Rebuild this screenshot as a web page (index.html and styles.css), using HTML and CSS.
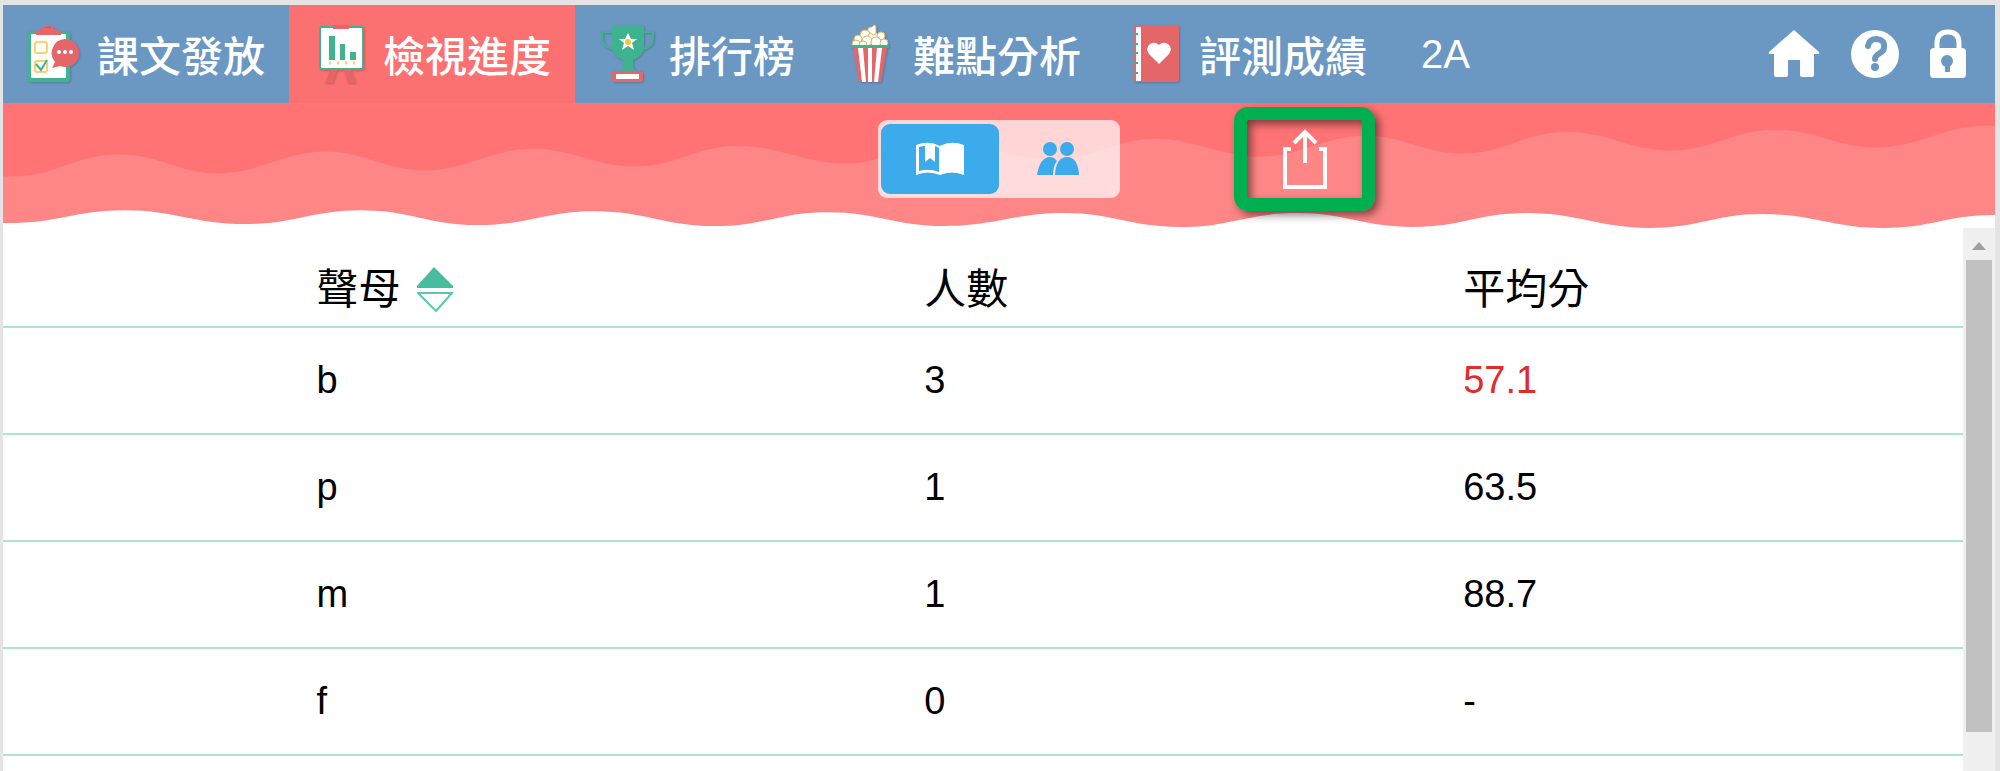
FILE: index.html
```html
<!DOCTYPE html>
<html lang="zh-Hant">
<head>
<meta charset="UTF-8" />
<title>檢視進度</title>
<link rel="stylesheet" href="styles.css">
</head>
<body>

<nav class="navbar">
  <a class="tab" href="#release">
    <svg class="tab-icon" viewBox="0 0 54 58">
      <rect x="0" y="6" width="43" height="51" rx="3" fill="#3fb28f"/>
      <rect x="4" y="9" width="35" height="44" rx="1" fill="#fff"/>
      <path d="M9 10V8q0-3 4-4h2q1-4 6-4t6 4h2q5 1 5 4v2z" fill="#e56668"/>
      <path d="M18 3q3-2 6 0" fill="none" stroke="#c9525a" stroke-width="1"/>
      <rect x="8" y="17" width="12" height="11" rx="2" fill="none" stroke="#ffd166" stroke-width="2"/>
      <rect x="8" y="36" width="12" height="11" rx="2" fill="none" stroke="#ffd166" stroke-width="2"/>
      <path d="M9 39l5 6 6-10" fill="none" stroke="#3fb28f" stroke-width="2"/>
      <path d="M38 14a14 14 0 1 1-5 27l-8 2 3-6A14 14 0 0 1 38 14z" fill="#e56668"/>
      <g fill="#fff"><circle cx="32" cy="27" r="2"/><circle cx="38" cy="27" r="2"/><circle cx="44" cy="27" r="2"/></g>
    </svg>
    <span>課文發放</span>
  </a>
  <a class="tab active" href="#progress" aria-current="page">
    <svg class="tab-icon" viewBox="-1 0 54 58">
      <path d="M16 45h7l-4 13h-8zM30 45h7l5 13h-8z" fill="#e56668"/>
      <rect x="6" y="2" width="43" height="42" rx="2" fill="#fff" stroke="#3fb28f" stroke-width="2"/>
      <rect x="19" y="0" width="16" height="4" fill="#e56668"/>
      <path d="M15 11h6v24h-6zM26 19h5v16h-5zM36 27h6v8h-6z" fill="#3fb28f"/>
      <path d="M15 38h28" stroke="#ffd166" stroke-width="3" stroke-dasharray="2 6"/>
    </svg>
    <span>檢視進度</span>
  </a>
  <a class="tab" href="#ranking">
    <svg class="tab-icon" viewBox="-2 0 54 58">
      <path d="M12 7H1v6q0 10 13 11M42 7h10v6q0 10-12 11" fill="none" stroke="#3fb28f" stroke-width="2"/>
      <path d="M11 2q0-2 2-2h28q2 0 2 2v19q0 10-11 14v6q1 4 4 6H18q3-2 4-6v-6Q11 31 11 21z" fill="#3fb28f"/>
      <path d="M27 8l3 6h6l-5 4 2 7-6-4-6 4 2-7-5-4h6z" fill="#fff"/>
      <circle cx="27" cy="17" r="3" fill="#ffc233"/>
      <rect x="11" y="46" width="31" height="11" rx="2" fill="#e56668"/>
      <rect x="15" y="49" width="23" height="5" fill="#fff"/>
    </svg>
    <span>排行榜</span>
  </a>
  <a class="tab" href="#analysis">
    <svg class="tab-icon" viewBox="0 0 54 58">
      <g fill="#fff" stroke="#d9b955" stroke-width="1">
        <circle cx="22" cy="10" r="5"/>
        <circle cx="30" cy="12" r="5"/>
        <path d="M25 6q-1-4 4-4 3-4 4 0v7l-3 1z"/>
        <circle cx="15" cy="14" r="4"/>
        <circle cx="38" cy="11" r="4"/>
        <circle cx="24" cy="16" r="5"/>
        <circle cx="33" cy="17" r="5"/>
        <circle cx="13" cy="19" r="4"/>
        <circle cx="41" cy="18" r="4"/>
        <circle cx="20" cy="20" r="4"/>
      </g>
      <path d="M10 23h34l-6 34H16z" fill="#e56668"/>
      <path d="M15 23h5l3 34h-4zM25 23h4v34h-4zM34 23h5l-4 34h-4z" fill="#fff"/>
      <path d="M8 20h38v3H8z" fill="#3fb28f"/>
    </svg>
    <span>難點分析</span>
  </a>
  <a class="tab" href="#results">
    <svg class="tab-icon" viewBox="0 0 54 58">
      <rect x="5" y="0" width="45" height="57" rx="2" fill="#e56668"/>
      <path d="M7 2h5v54H7z" fill="#fff"/>
      <path d="M4 9h5M4 19h5M4 28h5M4 38h5M4 48h5" stroke="#3fb28f" stroke-width="2"/>
      <path d="M30 39L20 29q-4-6 1-10 5-3 9 1 4-4 9-1 5 4 1 10z" fill="#fff"/>
    </svg>
    <span>評測成績</span>
  </a>
  <span class="class-name">2A</span>

  <div class="tools">
    <a href="#home" aria-label="主頁">
      <svg width="52" height="50" viewBox="0 0 52 50"><path d="M26 1L51 23q1 2-1 2h-4v21q0 2-2 2H34q-2 0-2-2V31H20v15q0 2-2 2H8q-2 0-2-2V25H2q-2 0-1-2z" fill="#fff"/></svg>
    </a>
    <a href="#help" aria-label="說明">
      <svg width="50" height="50" viewBox="0 0 50 50">
        <circle cx="25" cy="25" r="24" fill="#fff"/>
        <path d="M18 17q1-7 9-7 8 1 7 8 0 4-4 6-5 3-5 6" fill="none" stroke="#6b98c3" stroke-width="6" stroke-linecap="round"/>
        <circle cx="25" cy="38" r="4" fill="#6b98c3"/>
      </svg>
    </a>
    <a href="#lock" aria-label="鎖定">
      <svg width="36" height="50" viewBox="0 0 36 50">
        <path d="M7 22v-8q0-11 11-11t11 11v8" fill="none" stroke="#fff" stroke-width="5"/>
        <rect x="0" y="19" width="36" height="30" rx="4" fill="#fff"/>
        <circle cx="17" cy="32" r="6" fill="#6b98c3"/>
        <path d="M15 32h5v11h-5z" fill="#6b98c3"/>
      </svg>
    </a>
  </div>
</nav>

<header class="banner">
  <svg class="waves" viewBox="0 0 1992 126" preserveAspectRatio="none">
    <path fill="#ff7375" d="M0 0H1992V113H0z"/>
    <path fill="#ff8686" d="M0 74H12C52 74 72 52 115 52S175 71 215 71S282 49 322 49S382 68 422 68S490 46 530 46S592 64 632 64S695 43 735 43S802 61 842 61S903 40 943 40S1010 57 1050 57S1112 36 1152 36S1217 54 1257 54S1322 33 1362 33S1420 51 1460 51S1524 29 1564 29S1628 48 1668 48S1732 27 1772 27S1834 45 1874 45S1942 23 1982 23H1992V126H0z"/>
    <path fill="#fff" d="M0 121H5C55 121 72 108 122 108S192 122 242 122S308 108 358 108S425 123 475 123S542 109 592 109S662 124 712 124S775 110 825 110S892 124 942 124S1011 111 1061 111S1127 125 1177 125S1244 111 1294 111S1360 125 1410 125S1474 111 1524 111S1597 126 1647 126S1710 112 1760 112S1830 126 1880 126S1942 113 1992 113V127H0z"/>
  </svg>
  <div class="toggle">
    <button class="toggle-btn selected" aria-label="課文" aria-pressed="true">
      <svg width="50" height="34" viewBox="0 0 50 34">
        <path d="M1 3Q14-2 25 4Q36-2 49 3V33Q37 28 25 33Q13 28 1 33z" fill="#fff"/>
        <path d="M4 5q3-1 6-1v16l5-4 5 4V4q3 1 4 2v24q-10-4-20-1z" fill="#3babec"/>
        <path d="M11 3h8v15l-4-3-4 4z" fill="#fff"/>
      </svg>
    </button>
    <button class="toggle-btn" aria-label="學生" aria-pressed="false">
      <svg width="42" height="34" viewBox="0 0 42 34" fill="#3babec">
        <circle cx="13" cy="7" r="7"/>
        <circle cx="30" cy="7" r="7"/>
        <path d="M0 33Q3 15 13 15q4 0 7 4-4 5-4 14zM18 33q1-18 12-18T42 33z"/>
      </svg>
    </button>
  </div>
  <button class="export" aria-label="匯出">
    <svg width="46" height="62" viewBox="0 0 46 62" fill="none" stroke="#fff" stroke-width="4">
      <path d="M9 21H3v38h40V21h-6"/>
      <path d="M23 35V4M12 15L23 4l11 11"/>
    </svg>
  </button>
</header>

<main class="content">
  <div class="table-wrap">
    <table>
      <thead>
        <tr>
          <th>
            <div class="sort-head">聲母
              <button class="sort" aria-label="排序">
                <svg width="36" height="46" viewBox="0 0 36 46">
                  <path d="M17 0L36 19v2H0v-2z" fill="#48bc9e"/>
                  <path d="M1 26h34L19 44z" fill="none" stroke="#5cc9ad" stroke-width="2"/>
                </svg>
              </button>
            </div>
          </th>
          <th>人數</th>
          <th>平均分</th>
        </tr>
      </thead>
      <tbody>
        <tr><td>b</td><td>3</td><td class="low">57.1</td></tr>
        <tr><td>p</td><td>1</td><td>63.5</td></tr>
        <tr><td>m</td><td>1</td><td>88.7</td></tr>
        <tr><td>f</td><td>0</td><td>-</td></tr>
      </tbody>
    </table>
  </div>
  <div class="scrollbar">
    <span class="arrow-up"></span>
    <span class="thumb"></span>
  </div>
</main>

</body>
</html>
```
FILE: styles.css
```css
* {
  box-sizing: border-box;
}
body {
  margin: 0;
  height: 100vh;
  display: flex;
  flex-direction: column;
  overflow: hidden;
  border: solid #e4e4e4;
  border-width: 5px 5px 0 3px;
  font-family: "Liberation Sans", "Noto Sans CJK TC", sans-serif;
  font-size: 38px;
  color: #000;
  background: #fff;
}
button {
  padding: 0;
  border: none;
  background: none;
  cursor: pointer;
}
svg {
  display: block;
}

/* 導覽列 */
.navbar {
  display: flex;
  flex: none;
  height: 98px;
  background: #6b98c3;
  color: #fff;
}
.tab {
  display: flex;
  align-items: center;
  gap: 16px;
  padding: 0 24px;
  font-size: 42px;
  font-weight: 500;
  line-height: 60px;
  white-space: nowrap;
  color: #fff;
  text-decoration: none;
}
.tab span {
  padding-top: 8px;
}
.tab.active {
  background: #fb7172;
}
.tab-icon {
  width: 54px;
  height: 58px;
  overflow: visible;
  filter: drop-shadow(1px 1px 1px rgba(0,0,0,0.2));
}
.class-name {
  align-self: center;
  padding: 0 30px;
  font-size: 40px;
}
.tools {
  display: flex;
  align-items: center;
  gap: 30px;
  margin-left: auto;
  padding-right: 29px;
}

/* 波浪橫幅 */
.banner {
  position: relative;
  display: grid;
  grid-template-columns: 1fr auto 1fr;
  align-items: center;
  flex: none;
  height: 125px;
  padding-bottom: 14px;
}
.waves {
  position: absolute;
  top: 0;
  left: 0;
  width: 100%;
  height: 100%;
}
.toggle {
  position: relative;
  grid-column: 2;
  display: flex;
  padding: 4px 3px;
  border-radius: 9px;
  background: rgba(255,255,255,0.7);
}
.toggle-btn {
  display: flex;
  align-items: center;
  justify-content: center;
  width: 118px;
  height: 70px;
  border-radius: 9px;
}
.toggle-btn.selected {
  background: #3babec;
}
.export {
  position: relative;
  grid-column: 3;
  display: flex;
  align-items: center;
  justify-content: center;
  width: 141px;
  height: 104px;
  margin-left: 114px;
  border: 13px solid #00b050;
  border-radius: 14px;
  box-shadow: 4px 4px 8px rgba(0,0,0,0.5), inset 4px 4px 8px rgba(0,0,0,0.5);
}

/* 成績表 */
.content {
  display: flex;
  flex: 1;
  min-height: 0;
}
.table-wrap {
  flex: 1;
  overflow: hidden;
}
table {
  width: 100%;
  table-layout: fixed;
  border-collapse: collapse;
}
th, td {
  height: 107px;
  padding: 0;
  text-align: left;
  border-bottom: 2px solid #b0e3d3;
}
th {
  height: 99px;
  padding-top: 26px;
  font-size: 42px;
  font-weight: 400;
  line-height: 60px;
}
th:nth-child(1) {
  width: 47%;
}
th:nth-child(2) {
  width: 27.5%;
}
th:first-child, td:first-child {
  padding-left: 16%;
}
.low {
  color: #e02b2b;
}
.sort-head {
  display: flex;
  align-items: center;
  gap: 16px;
}

/* 捲軸 */
.scrollbar {
  display: flex;
  flex-direction: column;
  align-items: center;
  width: 32px;
  background: #f0f0f0;
}
.arrow-up {
  margin: 14px 0 10px;
  border: 7px solid transparent;
  border-top: none;
  border-bottom: 8px solid #a0a0a0;
}
.thumb {
  width: 26px;
  height: 87%;
  background: #c1c1c1;
}
```
